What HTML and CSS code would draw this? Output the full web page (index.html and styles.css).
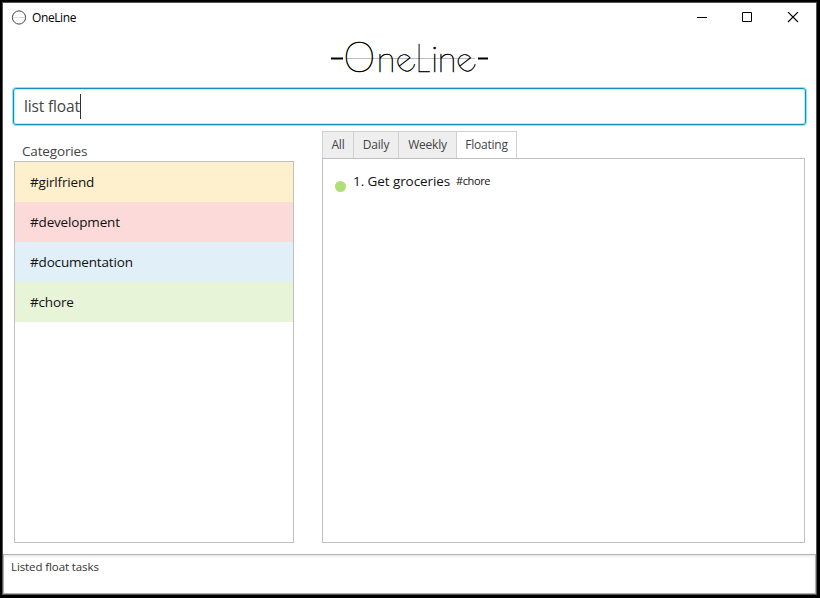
FILE: index.html
```html
<!DOCTYPE html>
<html lang="en">
<head>
<meta charset="utf-8">
<title>OneLine</title>
<link rel="stylesheet" href="styles.css">
</head>
<body>
<div class="window">
  <header class="titlebar">
    <svg class="app-icon" width="16" height="16" viewBox="0 0 16 16"><circle cx="8" cy="7.5" r="6.6" fill="none" stroke="#444"/><path d="M2 7.5H14" stroke="#ddd"/></svg>
    <span class="title">OneLine</span>
    <svg class="controls" width="103" height="12" viewBox="0 0 103 12" fill="none" stroke="#000">
      <path d="M0 5.5H10"/>
      <path d="M45.5 .5H54.5V9.5H45.5Z"/>
      <path d="M91 0L101 10M101 0L91 10" stroke-width="1.1"/>
    </svg>
  </header>
  <svg class="logo" width="160" height="40" viewBox="330 38 160 40">
    <path d="M346 58.5H475" stroke="#bbb"/>
    <path d="M331 58.5H343M478 58.5H488" stroke="#000" stroke-width="2"/>
    <text y="72.3"><tspan class="round" x="343.2">O</tspan><tspan x="376.5">n</tspan><tspan x="403.4" y="75.6" rotate="-38">e</tspan><tspan class="cap" x="415.5" y="72.3" textLength="14.5" lengthAdjust="spacingAndGlyphs">L</tspan><tspan x="431" y="72.3">i</tspan><tspan x="437.5">n</tspan><tspan x="464" y="75.6" rotate="-38">e</tspan></text>
  </svg>
  <div class="command"><span class="command-text">list float</span><i class="caret"></i></div>
  <main class="content">
    <section class="categories">
      <h2><span>Categories</span></h2>
      <ul class="panel">
        <li class="yellow">#girlfriend</li>
        <li class="red">#development</li>
        <li class="blue">#documentation</li>
        <li class="green">#chore</li>
      </ul>
    </section>
    <section class="tasks">
      <nav class="tabs"><span class="tab all">All</span><span class="tab daily">Daily</span><span class="tab weekly">Weekly</span><span class="tab floating">Floating</span></nav>
      <div class="panel">
        <div class="task"><i class="dot"></i><span class="name">1. Get groceries</span><span class="tag">#chore</span></div>
      </div>
    </section>
  </main>
  <footer class="status"><span>Listed float tasks</span></footer>
</div>
</body>
</html>
```
FILE: styles.css
```css
* { box-sizing: border-box; }
body {
  margin: 0;
  width: 820px;
  height: 598px;
  padding: 2px 3px 3px 2px;
  background: #000;
  font-family: "Open Sans", "Noto Sans", sans-serif;
  color: #111;
  overflow: hidden;
}
.window {
  height: 593px;
  display: flex;
  flex-direction: column;
  background: #fff;
  border: 1px solid #555;
}
.titlebar {
  height: 29px;
  flex: none;
  display: flex;
  align-items: center;
  padding: 0 16px 0 8px;
  font-size: 12px;
  color: #000;
}
.title { margin-left: 5px; letter-spacing: -0.4px; }
.controls { margin-left: auto; }
.logo { margin: 6px 0 0 327px; flex: none; overflow: visible; opacity: 0.999; }
.logo text {
  font-family: Lato, sans-serif;
  font-weight: 100;
  font-size: 35px;
  stroke: #000;
  stroke-width: 0.6px;
}
.logo .cap { font-size: 40px; }
.logo .round { font-size: 41px; }
.command {
  height: 37px;
  flex: none;
  margin: 10px 10px 0 10px;
  padding-left: 10px;
  display: flex;
  align-items: center;
  border: 1px solid #168db2;
  border-radius: 3px;
  box-shadow: 0 0 0 1px #8be6fa, inset 0 0 0 1px #b9f0fc;
  font-size: 15.5px;
  line-height: 20px;
  color: #444;
}
.command-text { width: 56px; margin-top: -2px; white-space: nowrap; letter-spacing: -0.15px; }
.caret { width: 1px; height: 25px; background: #333; }
.content { display: flex; height: 418px; flex: none; padding: 0 11px; }
.categories { width: 280px; display: flex; flex-direction: column; }
h2 {
  margin: 0;
  height: 36px;
  padding: 16px 0 0 8px;
  font-size: 13.5px;
  line-height: 20px;
  font-weight: 400;
  letter-spacing: -0.15px;
  color: #444;
}
.panel { flex: 1; margin: 0; padding: 0; border: 1px solid #c0c0c0; list-style: none; }
li { height: 40px; padding-left: 15px; font-size: 13.5px; line-height: 40px; letter-spacing: -0.17px; }
.yellow { background: #fff0cd; }
.red { background: #fddada; }
.blue { background: #e1eff8; }
.green { background: #e7f4d7; }
.tasks { flex: 1; margin-left: 28px; display: flex; flex-direction: column; padding-top: 6px; }
.tabs { display: flex; height: 27px; }
.tab {
  border: 1px solid #d0d0d0;
  border-width: 1px 1px 0 0;
  background: #eee;
  color: #444;
  font-size: 12px;
  line-height: 26px;
  letter-spacing: -0.2px;
  text-align: center;
}
.all { width: 32px; border-left-width: 1px; }
.daily { width: 45px; }
.weekly { width: 58px; }
.floating { width: 60px; background: #fff; }
.task { display: flex; align-items: center; height: 22px; margin: 11px 0 0 12px; }
.dot { width: 11px; height: 11px; margin: 11px 7px 0 0; border-radius: 50%; background: #afdf75; }
.name { width: 103px; font-size: 13.5px; letter-spacing: -0.08px; white-space: nowrap; }
.tag { margin-top: -1px; font-size: 11px; letter-spacing: -0.4px; }
.status {
  flex: 1;
  margin-top: 11px;
  padding: 4px 7px;
  border: 1px solid #b0b0b0;
  box-shadow: inset 0 2px 2px #eee;
  font-size: 11.5px;
  line-height: 16px;
  letter-spacing: -0.1px;
  color: #333;
}
```
